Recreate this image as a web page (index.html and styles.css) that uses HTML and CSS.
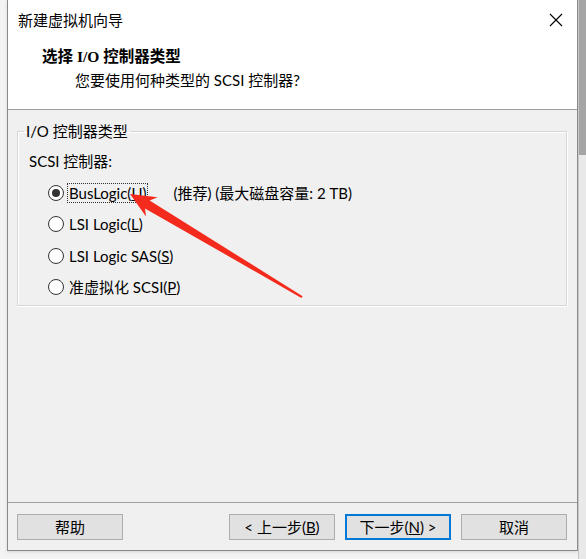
FILE: index.html
```html
<!DOCTYPE html>
<html lang="zh-CN">
<head>
<meta charset="utf-8">
<title>新建虚拟机向导</title>
<link rel="stylesheet" href="styles.css">
</head>
<body>
<div class="screen">
  <div class="gutter-left"></div>
  <div class="window">
    <div class="top">
      <div class="titlebar">
        <span class="title">新建虚拟机向导</span>
        <span class="close">
          <svg width="14" height="14" viewBox="0 0 14 14"><path d="M1 1 L13 13 M13 1 L1 13" stroke="#000" stroke-width="1.1" fill="none"/></svg>
        </span>
      </div>
      <div class="heading">选择 I/O 控制器类型</div>
      <div class="subtitle">您要使用何种类型的 SCSI 控制器?</div>
    </div>
    <div class="body">
      <fieldset class="group">
        <legend class="legend">I/O 控制器类型</legend>
        <div class="caption">SCSI 控制器:</div>
        <div class="options">
          <div class="option">
            <span class="radio checked"></span>
            <span class="label focused">BusLogic(<u>U</u>)</span>
            <span class="note">(推荐) (最大磁盘容量: 2 TB)</span>
          </div>
          <div class="option">
            <span class="radio"></span>
            <span class="label">LSI Logic(<u>L</u>)</span>
          </div>
          <div class="option">
            <span class="radio"></span>
            <span class="label">LSI Logic SAS(<u>S</u>)</span>
          </div>
          <div class="option">
            <span class="radio"></span>
            <span class="label">准虚拟化 SCSI(<u>P</u>)</span>
          </div>
        </div>
      </fieldset>
    </div>
    <div class="footer">
      <button class="btn">帮助</button>
      <div class="spacer"></div>
      <button class="btn">&lt; 上一步(<u>B</u>)</button>
      <button class="btn default">下一步(<u>N</u>) &gt;</button>
      <button class="btn">取消</button>
    </div>
  </div>
  <div class="gutter-right">
    <div class="shade"></div>
  </div>
  <svg class="arrow" width="586" height="559" viewBox="0 0 586 559">
    <polygon fill="#f42a1c" points="130,194 157.5,197.2 149.6,200.6 302.6,296.2 301.4,297.9 145,208.4 146,216.6"/>
  </svg>
</div>
</body>
</html>
```

FILE: styles.css
```css
* { box-sizing: border-box; }
html, body { margin: 0; padding: 0; }
body {
  background: #f3f3f3;
  font-family: "Lato", "Noto Sans CJK SC", sans-serif;
  font-size: 15px;
  color: #000;
}
.screen {
  position: relative;
  display: flex;
  width: 586px;
  height: 559px;
  overflow: hidden;
}
.gutter-left { width: 7px; flex: none; }
.window {
  width: 571px;
  height: 551px;
  flex: none;
  display: flex;
  flex-direction: column;
  border: 1px solid #8a8a8a;
  border-top: none;
  background: #f0f0f0;
  box-shadow: 0 1px 3px rgba(0,0,0,0.12);
}
.gutter-right {
  flex: 1;
  display: flex;
  flex-direction: column;
  background: #e9e9e9;
  border-left: 1px solid #c8c8c8;
}
.shade { height: 155px; background: #a5a5a5; }

.top {
  background: #fff;
  height: 110px;
  border-bottom: 1px solid #a0a0a0;
  flex: none;
}
.titlebar {
  height: 40px;
  display: flex;
  align-items: center;
  justify-content: space-between;
  padding: 0 14px 0 10px;
  line-height: 20px;
}
.close { display: flex; width: 14px; height: 14px; }
.heading {
  margin-top: 7px;
  padding-left: 34px;
  line-height: 20px;
  font-family: "Liberation Serif", "Noto Sans CJK SC", serif;
  font-weight: bold;
  font-size: 15.5px;
}
.subtitle {
  margin-top: 3px;
  padding-left: 67px;
  line-height: 20px;
}

.body {
  flex: 1;
  padding: 11px 10px 0 9px;
}
.group {
  margin: 0;
  padding: 0 0 8px 11px;
  border: 1px solid #d6d6d6;
  box-shadow: inset 1px 1px 0 #fff, 1px 1px 0 #fff;
  min-width: 0;
}
.legend {
  margin-left: -5px;
  padding: 0 2px;
  line-height: 20px;
}
.caption {
  margin-top: 10px;
  line-height: 20px;
}
.options {
  margin-top: 12px;
  display: flex;
  flex-direction: column;
  gap: 11.4px;
}
.option {
  display: flex;
  align-items: center;
  height: 20px;
  padding-left: 19px;
}
.radio {
  width: 16px;
  height: 16px;
  border: 1px solid #333;
  border-radius: 50%;
  background: #fff;
  display: flex;
  align-items: center;
  justify-content: center;
  flex: none;
}
.radio.checked::after {
  content: "";
  width: 8px;
  height: 8px;
  border-radius: 50%;
  background: #333;
}
.label {
  margin-left: 3px;
  padding: 0 1px;
  line-height: 18px;
  border: 1px solid transparent;
}
.label.focused { border: 1px dotted #333; }
.note { margin-left: 25px; line-height: 20px; }

.footer {
  flex: none;
  height: 48px;
  border-top: 1px solid #a0a0a0;
  display: flex;
  align-items: flex-start;
  padding: 11px 10px 0 9px;
  gap: 10px;
}
.spacer { flex: 1; }
.btn {
  width: 106px;
  height: 26px;
  border: 1px solid #adadad;
  background: #e1e1e1;
  font-family: "Lato", "Noto Sans CJK SC", sans-serif;
  font-size: 15px;
  line-height: 20px;
  color: #000;
  padding: 0;
  margin: 0;
}
.btn.default { border: 2px solid #0078d7; }

.arrow {
  position: absolute;
  left: 0;
  top: 0;
  pointer-events: none;
}
```
